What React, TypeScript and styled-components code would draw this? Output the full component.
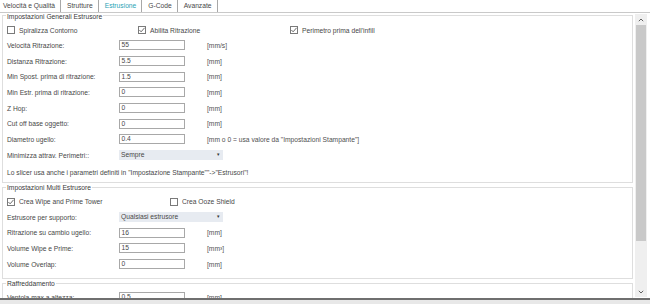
import styled, { createGlobalStyle } from 'styled-components';

const GlobalStyle = createGlobalStyle`
  html, body {
    margin: 0;
    padding: 0;
    background: #e8e8e8;
  }
  body {
    font-family: "Liberation Sans", Arial, sans-serif;
    font-size: 6.7px;
    color: #474747;
  }
`;

type Field = { label: string; value?: string; unit?: string; select?: string };

const generalFields: Field[] = [
    { label: 'Velocità Ritrazione:', value: '55', unit: '[mm/s]' },
    { label: 'Distanza Ritrazione:', value: '5.5', unit: '[mm]' },
    { label: 'Min Spost. prima di ritrazione:', value: '1.5', unit: '[mm]' },
    { label: 'Min Estr. prima di ritrazione:', value: '0', unit: '[mm]' },
    { label: 'Z Hop:', value: '0', unit: '[mm]' },
    { label: 'Cut off base oggetto:', value: '0', unit: '[mm]' },
    { label: 'Diametro ugello:', value: '0.4', unit: '[mm o 0 = usa valore da "Impostazioni Stampante"]' },
    { label: 'Minimizza attrav. Perimetri::', select: 'Sempre' },
];

const multiFields: Field[] = [
    { label: 'Estrusore per supporto:', select: 'Qualsiasi estrusore' },
    { label: 'Ritrazione su cambio ugello:', value: '16', unit: '[mm]' },
    { label: 'Volume Wipe e Prime:', value: '15', unit: '[mm³]' },
    { label: 'Volume Overlap:', value: '0', unit: '[mm]' },
];

const coolingFields: Field[] = [
    { label: 'Ventola max a altezza:', value: '0.5', unit: '[mm]' },
    { label: 'Ventola max a strato:', value: '4', unit: '[layer]' },
    { label: 'Tempo minimo per strato:', value: '5', unit: '[s]' },
];

const tabs = ['Velocità e Qualità', 'Strutture', 'Estrusione', 'G-Code', 'Avanzate'];

function FieldRow({ field }: { field: Field }) {
    return (
        <Row>
            <Label>{field.label}</Label>
            {field.select ? (
                <Select>
                    <span>{field.select}</span>
                    <Caret>▾</Caret>
                </Select>
            ) : (
                <>
                    <Input>{field.value}</Input>
                    <Unit>{field.unit}</Unit>
                </>
            )}
        </Row>
    );
}

function Check({ label, checked }: { label: string; checked?: boolean }) {
    return (
        <CheckItem>
            <Box>
                {checked && (
                    <svg width="8" height="8" viewBox="0 0 8 8">
                        <polyline points="1.4,4 3.1,5.8 6.6,1.8" fill="none" stroke="#5a5a5a" strokeWidth="0.9" />
                    </svg>
                )}
            </Box>
            <span>{label}</span>
        </CheckItem>
    );
}

export default function App() {
    return (
        <Window>
            <GlobalStyle />
            <TabBar>
                {tabs.map((t) => (
                    <Tab key={t} $active={t === 'Estrusione'}>{t}</Tab>
                ))}
            </TabBar>

            <Body>
                <Content>
                    <Group $gap={1.5}>
                        <GroupTitle>Impostazioni Generali Estrusore</GroupTitle>
                        <CheckRow $cols="131px 152px auto">
                            <Check label="Spiralizza Contorno" />
                            <Check label="Abilita Ritrazione" checked />
                            <Check label="Perimetro prima dell'infill" checked />
                        </CheckRow>
                        {generalFields.map((f) => (
                            <FieldRow key={f.label} field={f} />
                        ))}
                        <Note>
                            Lo slicer usa anche i parametri definiti in "Impostazione Stampante""-&gt;"Estrusori"!
                        </Note>
                    </Group>

                    <Group $gap={6}>
                        <GroupTitle>Impostazioni Multi Estrusore</GroupTitle>
                        <CheckRow $cols="163px auto">
                            <Check label="Crea Wipe and Prime Tower" checked />
                            <Check label="Crea Ooze Shield" />
                        </CheckRow>
                        {multiFields.map((f) => (
                            <FieldRow key={f.label} field={f} />
                        ))}
                    </Group>

                    <Group $gap={4} $lead={1}>
                        <GroupTitle>Raffreddamento</GroupTitle>
                        {coolingFields.map((f) => (
                            <FieldRow key={f.label} field={f} />
                        ))}
                    </Group>
                </Content>

                <ScrollBar>
                    <ArrowButton>
                        <svg width="6" height="4" viewBox="0 0 6 4">
                            <polyline points="0.8,3.2 3,1 5.2,3.2" fill="none" stroke="#606060" strokeWidth="1" />
                        </svg>
                    </ArrowButton>
                    <Track>
                        <Thumb />
                    </Track>
                    <ArrowButton>
                        <svg width="6" height="4" viewBox="0 0 6 4">
                            <polyline points="0.8,0.8 3,3 5.2,0.8" fill="none" stroke="#606060" strokeWidth="1" />
                        </svg>
                    </ArrowButton>
                </ScrollBar>
            </Body>
        </Window>
    );
}

const Window = styled.div`
    width: 650px;
    height: 304px;
    display: flex;
    flex-direction: column;
    background: #e8e8e8;
    overflow: hidden;
`;

const TabBar = styled.div`
    height: 12px;
    display: flex;
    background: #fff;
`;

const Tab = styled.div<{ $active?: boolean }>`
    line-height: 12px;
    padding: 0 5px 0 6px;
    border-right: 1px solid #a8a8a8;
    color: ${(p) => (p.$active ? '#2aa3b5' : '#474747')};
    white-space: nowrap;

    &:first-child {
        padding-left: 3px;
    }
`;

const Body = styled.div`
    height: 285px;
    display: flex;
    background: #fff;
    border-top: 1px solid #c9c9c9;
    border-bottom: 2px solid #6f6f6f;
`;

const Content = styled.div`
    flex: 1;
    overflow: hidden;
    padding: 0 2px;
`;

const Group = styled.div<{ $gap: number; $lead?: number }>`
    display: flex;
    flex-direction: column;
    border: 1px solid #dedede;
    margin-top: ${(p) => (p.$lead ? 4 : 2)}px;
    padding: 0 4px ${(p) => p.$gap}px;

    & + & {
        margin-top: ${(p) => (p.$lead ? 4 : 3.2)}px;
    }

    & > ${() => Row}:nth-child(2) {
        margin-top: ${(p) => p.$lead ?? 0}px;
    }
`;

const GroupTitle = styled.div`
    align-self: flex-start;
    margin: -3.5px 0 0 -1px;
    padding: 0 1px;
    line-height: 8px;
    background: #fff;
    color: #3a3a3a;
`;

const CheckRow = styled.div<{ $cols: string }>`
    display: grid;
    grid-template-columns: ${(p) => p.$cols};
    align-items: center;
    height: 15px;
    margin-top: 2px;
`;

const CheckItem = styled.div`
    display: flex;
    align-items: center;
    gap: 4px;
    white-space: nowrap;
`;

const Box = styled.div`
    width: 8px;
    height: 8px;
    box-sizing: border-box;
    border: 1px solid #7a7a7a;
    background: #fff;
    display: flex;
    align-items: center;
    justify-content: center;

    svg {
        flex: none;
    }
`;

const Row = styled.div`
    display: flex;
    align-items: center;
    height: 15.7px;
    flex: none;
`;

const Label = styled.div`
    width: 112px;
    flex: none;
    white-space: nowrap;
`;

const Input = styled.div`
    width: 66px;
    height: 10px;
    box-sizing: border-box;
    border: 1px solid #a8a8a8;
    background: #fff;
    padding-left: 1.5px;
    line-height: 8px;
    flex: none;
`;

const Unit = styled.div`
    margin-left: 22px;
    white-space: nowrap;
    color: #505050;
`;

const Select = styled.div`
    width: 104px;
    height: 9.5px;
    box-sizing: border-box;
    background: #e7ebf1;
    padding: 0 3px 0 2px;
    display: flex;
    align-items: center;
    justify-content: space-between;
    line-height: 9.5px;
`;

const Caret = styled.span`
    color: #333;
    font-size: 5px;
`;

const Note = styled.div`
    height: 15.7px;
    line-height: 15.7px;
    margin-top: 1.5px;
    white-space: nowrap;
`;

const ScrollBar = styled.div`
    width: 12px;
    margin: 1px 3px 1px 0;
    background: #efefef;
    display: flex;
    flex-direction: column;
`;

const ArrowButton = styled.div`
    height: 11px;
    display: flex;
    align-items: center;
    justify-content: center;
    flex: none;
`;

const Track = styled.div`
    flex: 1;
    display: flex;
    flex-direction: column;
    padding: 0 1px;
`;

const Thumb = styled.div`
    height: 216px;
    background: #c9c9c9;
`;
